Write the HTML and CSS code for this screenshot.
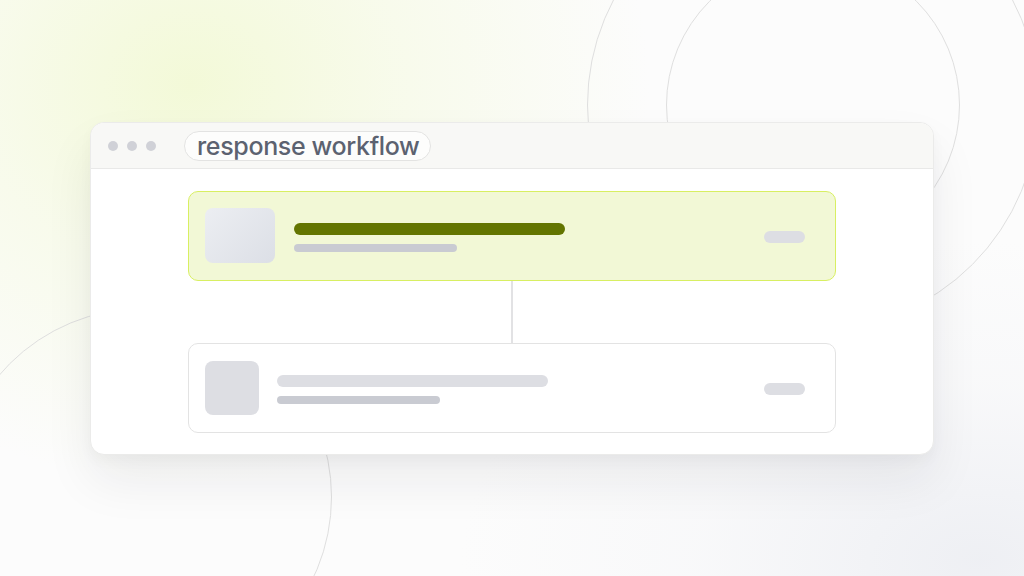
FILE: index.html
```html
<!DOCTYPE html>
<html lang="en">
<head>
<meta charset="utf-8">
<title>response workflow</title>
<link rel="stylesheet" href="styles.css">
</head>
<body>
<div class="stage">
  <div class="ring ring-a"></div>
  <div class="ring ring-b"></div>
  <div class="ring ring-c"></div>

  <div class="window">
    <div class="titlebar">
      <div class="dots"><span class="dot"></span><span class="dot"></span><span class="dot"></span></div>
      <div class="title-pill">response workflow</div>
    </div>
    <div class="content">
      <div class="card card-active">
        <div class="thumb thumb-active"></div>
        <div class="lines">
          <div class="bar bar-main bar-green"></div>
          <div class="bar bar-sub"></div>
        </div>
        <div class="tag"></div>
      </div>
      <div class="connector"></div>
      <div class="card">
        <div class="thumb thumb-idle"></div>
        <div class="lines">
          <div class="bar bar-main bar-grey"></div>
          <div class="bar bar-sub"></div>
        </div>
        <div class="tag"></div>
      </div>
    </div>
  </div>
</div>
</body>
</html>
```

FILE: styles.css
```css
* { box-sizing: border-box; }
html, body {
  margin: 0;
  padding: 0;
  width: 1024px;
  height: 576px;
  overflow: hidden;
}
body {
  font-family: Inter, "Noto Sans", "Liberation Sans", sans-serif;
  background:
    radial-gradient(ellipse 460px 400px at 190px 85px, rgba(242, 249, 212, 0.9) 0%, rgba(245, 250, 224, 0.6) 45%, rgba(250, 252, 240, 0) 100%),
    radial-gradient(ellipse 520px 320px at 980px 560px, rgba(232, 234, 240, 0.7) 0%, rgba(240, 241, 245, 0.3) 55%, rgba(255, 255, 255, 0) 100%),
    #fcfcfc;
}
.stage {
  position: relative;
  width: 1024px;
  height: 576px;
  overflow: hidden;
  padding: 122px 0 0 90px;
}
.ring {
  position: absolute;
  border: 1.5px solid #dfdfdf;
  border-radius: 50%;
  z-index: 0;
}
.ring-a { left: 587px; top: -121px; width: 452px; height: 452px; }
.ring-b { left: 666px; top: -42px; width: 294px; height: 294px; }
.ring-c { left: -46px; top: 308px; width: 378px; height: 378px; }

.window {
  position: relative;
  z-index: 1;
  width: 844px;
  height: 333px;
  background: #ffffff;
  border: 1px solid #ebebea;
  border-radius: 14px;
  overflow: hidden;
  box-shadow: 0 26px 50px rgba(30, 32, 45, 0.07), 0 6px 14px rgba(30, 32, 45, 0.03);
}
.titlebar {
  height: 46px;
  background: #f8f8f6;
  border-bottom: 1px solid #e9e9e8;
  display: flex;
  align-items: center;
  padding-left: 17px;
  gap: 28px;
}
.dots { display: flex; gap: 9px; }
.dot {
  width: 10px;
  height: 10px;
  border-radius: 50%;
  background: #d0d1d7;
}
.title-pill {
  height: 30px;
  display: flex;
  align-items: center;
  padding: 0 11px 0 12px;
  border: 1px solid #e3e3e2;
  border-radius: 15px;
  background: #fdfdfc;
  color: #5c6270;
  font-size: 25px;
  font-weight: 500;
  letter-spacing: -0.35px;
  line-height: 1;
  margin-top: 1px;
}
.content {
  display: flex;
  flex-direction: column;
  align-items: flex-start;
  padding-top: 22px;
  padding-left: 97px;
}
.card {
  width: 648px;
  height: 90px;
  display: flex;
  align-items: center;
  padding: 0 30px 0 16px;
  border: 1px solid #e3e3e3;
  border-radius: 10px;
  background: #ffffff;
  gap: 18px;
}
.card-active {
  background: #f2f8d6;
  border: 1.5px solid #d8ef62;
  gap: 19px;
}
.thumb { border-radius: 8px; flex: none; }
.thumb-active {
  width: 70px;
  height: 55px;
  background: linear-gradient(135deg, #eceef2 0%, #dcdfe6 100%);
  margin-top: -1px;
}
.thumb-idle {
  width: 54px;
  height: 54px;
  background: #dddee3;
  margin-top: -1px;
}
.lines {
  display: flex;
  flex-direction: column;
  gap: 9px;
  flex: 1;
  margin-top: 3px;
}
.bar { border-radius: 6px; }
.bar-main { width: 271px; height: 12px; }
.bar-green { background: #637500; }
.bar-grey { background: #dddee3; }
.bar-sub { width: 163px; height: 8px; background: #c9cbd2; border-radius: 4px; }
.tag {
  width: 41px;
  height: 12px;
  border-radius: 6px;
  background: #dddee3;
  flex: none;
  margin-top: 1px;
}
.connector {
  width: 2px;
  height: 62px;
  margin-left: 323px;
  background: #e2e2e4;
}
```
